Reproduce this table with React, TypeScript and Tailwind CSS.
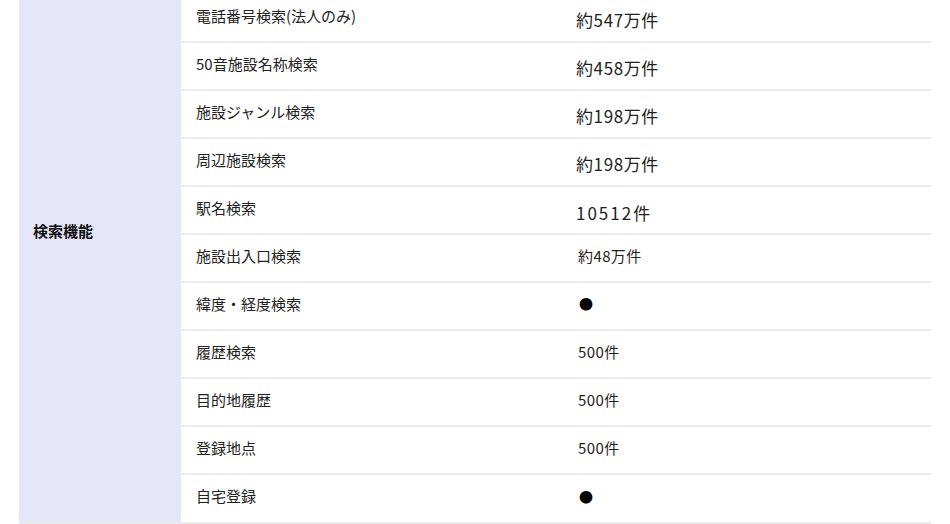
import React from "react";

type Row = { label: string; value: string; size?: "lg" | "num" | "md" | "dot" };

const rows: Row[] = [
  { label: "電話番号検索(法人のみ)", value: "約547万件", size: "lg" },
  { label: "50音施設名称検索", value: "約458万件", size: "lg" },
  { label: "施設ジャンル検索", value: "約198万件", size: "lg" },
  { label: "周辺施設検索", value: "約198万件", size: "lg" },
  { label: "駅名検索", value: "10512件", size: "num" },
  { label: "施設出入口検索", value: "約48万件", size: "md" },
  { label: "緯度・経度検索", value: "●", size: "dot" },
  { label: "履歴検索", value: "500件", size: "md" },
  { label: "目的地履歴", value: "500件", size: "md" },
  { label: "登録地点", value: "500件", size: "md" },
  { label: "自宅登録", value: "●", size: "dot" },
];

export default function App() {
  return (
    <div
      className="w-[950px] h-[524px] overflow-hidden bg-white text-[#222]"
      style={{ fontFamily: '"Noto Sans CJK JP", "Noto Sans", sans-serif' }}
    >
      {/* spec table, scrolled a few px */}
      <div className="mx-[19px] -mt-[5px] flex border-b-2 border-[#ebebeb]">
        {/* row header */}
        <div className="w-[162px] shrink-0 bg-[#e6e6fa] flex items-center pl-[14px] pb-[54px]">
          <span className="text-[15px] font-bold text-[#111]">検索機能</span>
        </div>

        <div className="flex-1 flex flex-col">
          {rows.map((r, i) => (
            <div
              key={r.label}
              className={
                i === rows.length - 1
                  ? "h-[47px] flex items-center"
                  : "h-[48px] flex items-center border-b-2 border-[#ebebeb]"
              }
            >
              <div className="w-[381px] shrink-0 pl-[15px] pb-[6px] text-[15px] leading-none">
                {r.label}
              </div>
              <div className="flex-1 pl-[14px]">
                {r.size === "lg" && (
                  <span className="block pt-[2px] text-[17px] leading-none tracking-[0.6px]">
                    {r.value}
                  </span>
                )}
                {r.size === "num" && (
                  <span className="block pt-[4px] text-[17px] leading-none tracking-[2px]">
                    {r.value}
                  </span>
                )}
                {r.size === "md" && (
                  <span className="block pl-[2px] pb-[6px] text-[15px] leading-none tracking-[0.4px]">
                    {r.value}
                  </span>
                )}
                {r.size === "dot" && (
                  <span className="block pl-[3px] pb-[6px] text-[14px] leading-none text-black">
                    {r.value}
                  </span>
                )}
              </div>
            </div>
          ))}
        </div>
      </div>
    </div>
  );
}
